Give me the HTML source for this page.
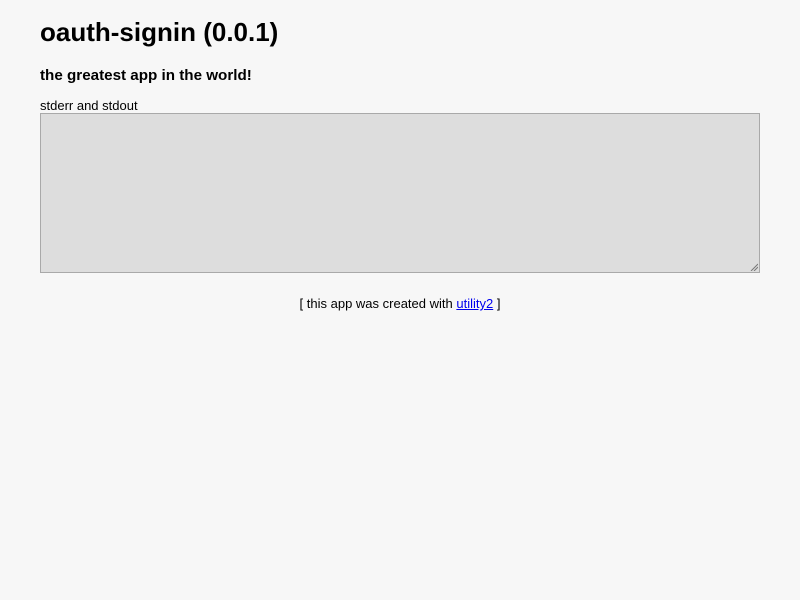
<!DOCTYPE html>
<html><head><meta charset="utf-8"><style>
body{margin:0;background:#f7f7f7;font-family:"Liberation Sans",sans-serif;color:#000}
h1{position:absolute;left:40px;top:17px;margin:0;font-size:26px;font-weight:bold;line-height:30px}
h3{position:absolute;left:40px;top:67px;margin:0;font-size:15.2px;font-weight:bold;line-height:18px}
.lbl{position:absolute;left:40px;top:98px;font-size:13px;line-height:15px}
.ta{position:absolute;left:40px;top:113px;width:718px;height:158px;background:#ddd;border:1px solid #a9a9a9}
.grip{position:absolute;right:1px;bottom:1px;width:8px;height:8px}
.ft{position:absolute;left:0;width:800px;top:296px;text-align:center;font-size:13px;line-height:15px}
a{color:#00e;text-decoration:underline}
</style></head><body>
<h1>oauth-signin (0.0.1)</h1>
<h3>the greatest app in the world!</h3>
<div class="lbl">stderr and stdout</div>
<div class="ta"><svg class="grip" viewBox="0 0 8 8"><path d="M1 8L8 1M4 8L8 4" stroke="#777" stroke-width="1"/></svg></div>
<div class="ft">[ this app was created with <a>utility2</a> ]</div>
</body></html>
